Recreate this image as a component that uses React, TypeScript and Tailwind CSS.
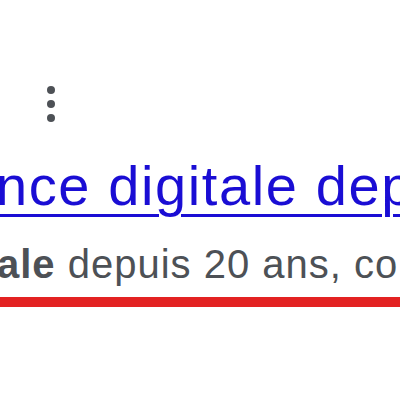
export default function App() {
  return (
    <div className="w-[400px] h-[400px] bg-white overflow-hidden flex flex-col font-['Liberation_Sans',Arial,sans-serif]">
      {/* three-dot menu */}
      <div className="ml-[47px] mt-[86px] flex flex-col gap-[6px]">
        <span className="w-[8px] h-[8px] rounded-full bg-[#4d5156]" />
        <span className="w-[8px] h-[8px] rounded-full bg-[#4d5156]" />
        <span className="w-[8px] h-[8px] rounded-full bg-[#4d5156]" />
      </div>

      <a
        href="#"
        className="mt-[32px] ml-[-4px] whitespace-nowrap text-[56px] leading-[64px] tracking-[1.6px] text-[#1a0dd4] underline decoration-[3px] underline-offset-[9px]"
      >
        nce digitale depuis 20 ans
      </a>

      <p className="mt-[22px] ml-[-3px] whitespace-nowrap text-[40px] leading-[48px] tracking-[1px] text-[#4d5156]">
        <b className="font-bold">ale</b> depuis 20 ans, comme
      </p>

      <div className="mt-[9px] h-[10px] w-full bg-[#e32222]" />
    </div>
  );
}
